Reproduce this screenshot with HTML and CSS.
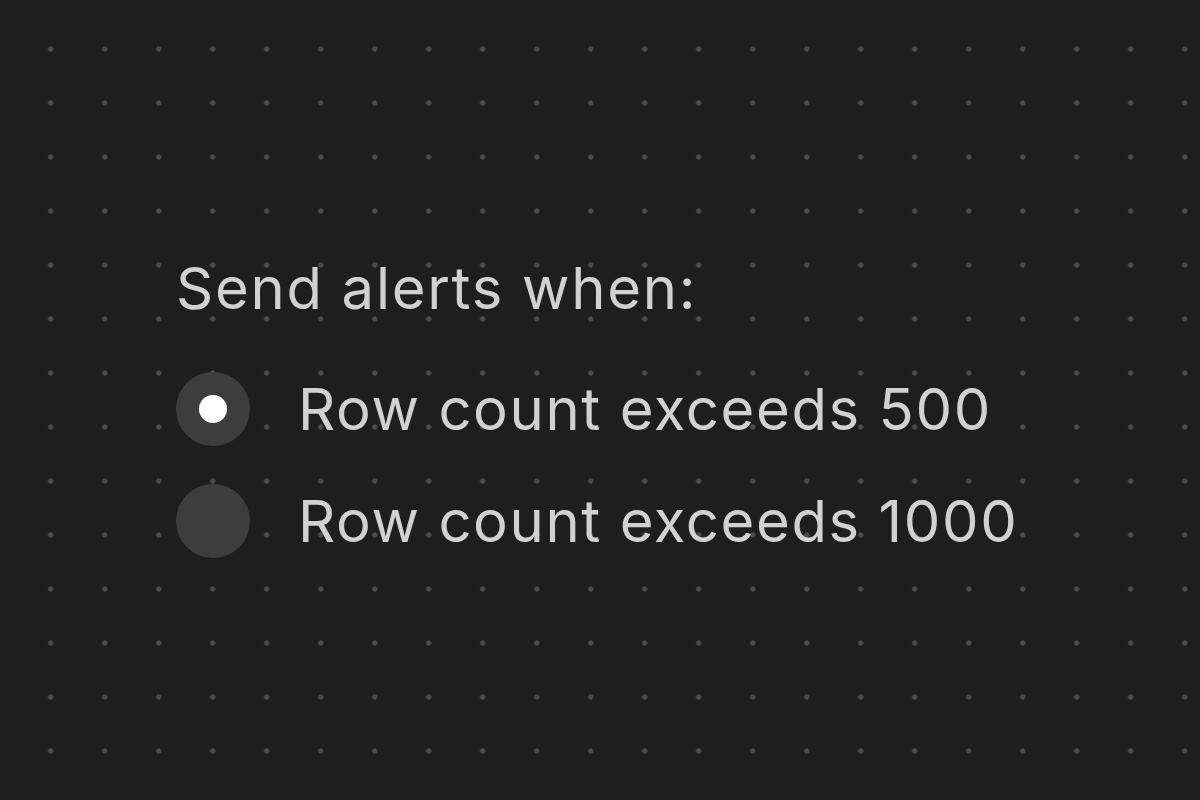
FILE: index.html
```html
<!DOCTYPE html>
<html lang="en">
<head>
<meta charset="utf-8">
<title>Alerts</title>
<link rel="stylesheet" href="styles.css">
</head>
<body>
<main class="canvas">
  <section class="group" role="radiogroup" aria-labelledby="lbl">
    <h1 class="title" id="lbl">Send alerts when:</h1>
    <div class="options">
      <label class="option">
        <span class="radio checked"><span class="dot"></span></span>
        <span class="text">Row count exceeds 500</span>
      </label>
      <label class="option">
        <span class="radio"></span>
        <span class="text">Row count exceeds 1000</span>
      </label>
    </div>
  </section>
</main>
</body>
</html>
```
FILE: styles.css
```css
html, body {
  margin: 0;
  padding: 0;
  width: 1200px;
  height: 800px;
  overflow: hidden;
}
body {
  background-color: #1e1e1e;
  background-image: radial-gradient(circle at 27px 27px, #4b4b4b 0, #4b4b4b 2.4px, transparent 3px);
  background-size: 54px 54px;
  background-position: 23.7px 22px;
  font-family: Inter, "Noto Sans", sans-serif;
  color: #d1d1d1;
}
.canvas {
  padding: 259px 0 0 176px;
}
.group {
  display: flex;
  flex-direction: column;
}
.title {
  margin: 0;
  font-size: 58px;
  font-weight: 400;
  line-height: 58px;
  letter-spacing: 1.7px;
}
.options {
  display: flex;
  flex-direction: column;
  gap: 38px;
  margin-top: 55px;
}
.option {
  display: flex;
  align-items: center;
  gap: 48px;
  height: 74px;
}
.radio {
  width: 74px;
  height: 74px;
  border-radius: 50%;
  background: #3d3d3d;
  display: flex;
  align-items: center;
  justify-content: center;
  flex: none;
}
.dot {
  width: 28px;
  height: 28px;
  border-radius: 50%;
  background: #ffffff;
}
.text {
  font-size: 58px;
  line-height: 58px;
  letter-spacing: 1.6px;
}
```
